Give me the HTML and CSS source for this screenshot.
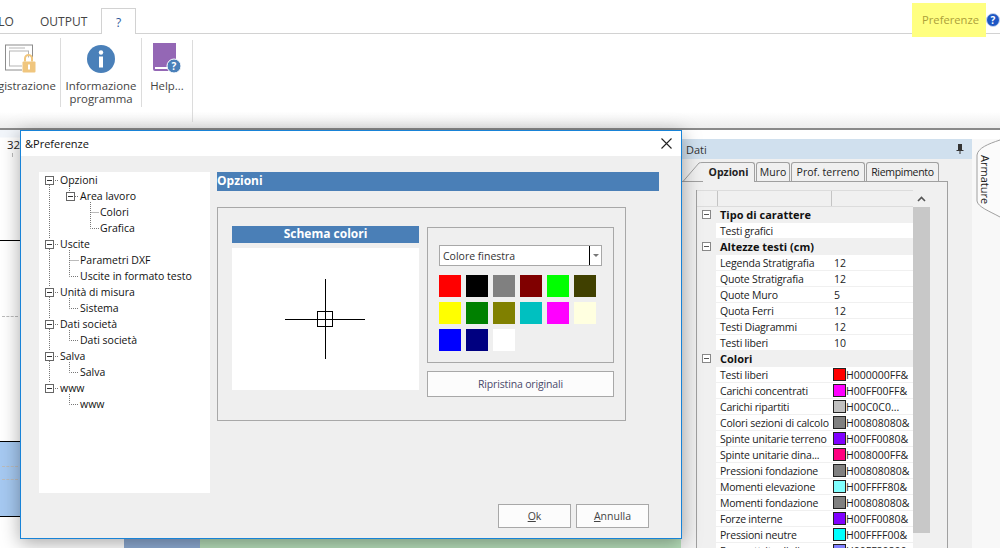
FILE: index.html
```html
<!DOCTYPE html>
<html lang="en">
<head>
  <meta charset="UTF-8">
  <title>Preferenze</title>
  <link rel="stylesheet" href="styles.css">
</head>
<body>

  <!-- Ribbon -->
  <header class="ribbon">
    <div class="tab-row">
      <span class="top-tab cut-tab">CALCOLO</span>
      <span class="top-tab">OUTPUT</span>
      <span class="top-tab active">?</span>
      <span class="pref-mark">Preferenze</span>
      <svg class="help-dot" width="14" height="14" viewBox="0 0 14 14">
        <circle cx="7" cy="7" r="6.5" fill="#1c56c4" stroke="#c9d6ee"/>
        <text x="7" y="11" text-anchor="middle" class="help-dot-text">?</text>
      </svg>
    </div>
    <div class="ribbon-body">
      <div class="rb-group rb-first">
        <svg width="31" height="29" viewBox="0 0 31 29" class="rb-icon">
          <rect x="0.5" y="0.5" width="27" height="25" fill="#fff" stroke="#8c8c8c"/>
          <rect x="4.5" y="6.5" width="19" height="15" fill="#fff" stroke="#b5b5b5"/>
          <path d="M4 3.500h16" stroke="#b5b5b5"/>
          <rect x="17" y="13" width="13" height="15" fill="#fff"/>
          <path d="M20 17v-3a3.500 3.500 0 0 1 7 0v3" fill="none" stroke="#f0c67e" stroke-width="2"/>
          <rect x="17.500" y="17" width="13" height="11" rx="1" fill="#f0c67e"/>
          <rect x="23" y="20" width="2" height="5" fill="#fff"/>
        </svg>
        <span class="rb-label">Registrazione</span>
      </div>
      <div class="rb-group rb-info">
        <svg width="28" height="28" viewBox="0 0 28 28" class="rb-icon">
          <circle cx="14" cy="14" r="14" fill="#4a80b9"/>
          <circle cx="14" cy="7.500" r="2.200" fill="#fff"/>
          <rect x="12" y="11.500" width="4" height="11" fill="#fff"/>
        </svg>
        <span class="rb-label">Informazione<br>programma</span>
      </div>
      <div class="rb-group rb-help">
        <svg width="30" height="30" viewBox="0 0 30 30" class="rb-icon">
          <path d="M1 0h23v24H3v2h16v2H3a2 2 0 0 1-2-2z" fill="#9467b5"/>
          <circle cx="22" cy="23" r="7" fill="#4a80b9" stroke="#fff"/>
          <text x="22" y="27" text-anchor="middle" class="book-mark">?</text>
        </svg>
        <span class="rb-label">Help...</span>
      </div>
    </div>
  </header>

  <main class="workspace">

    <!-- Drawing behind the dialog -->
    <section class="canvas">
      <div class="ruler"><span>32</span></div>
      <div class="plot">
        <div class="plot-blank"><i class="dash dash-a"></i></div>
        <div class="plot-band"><i class="dash dash-b"></i><i class="dash dash-c"></i></div>
        <div class="plot-rest"></div>
      </div>
      <div class="floor">
        <div class="floor-blue"></div>
        <div class="floor-green"></div>
      </div>
    </section>

    <!-- Data panel -->
    <aside class="dati">
      <div class="dati-main">
        <div class="dati-head"><span>Dati</span>
          <svg width="8" height="10" viewBox="0 0 8 10"><path d="M2 0h4v6h1.500v1h-3v3h-1V7h-3V6H2z" fill="#333"/></svg>
        </div>
        <div class="dati-tabs">
          <svg class="tab-slant" width="22" height="20" viewBox="0 0 22 20"><path d="M0 19.500h2L18 1q1-.5 4-.5" fill="none" stroke="#a0a0a0"/></svg>
          <span class="d-tab on">Opzioni</span>
          <span class="d-tab muro">Muro</span>
          <span class="d-tab prof">Prof. terreno</span>
          <span class="d-tab riemp">Riempimento</span>
        </div>
        <div class="dati-body">
          <div class="grid-wrap">
            <div class="grid">
              <div class="row head"><i></i><b></b><em></em></div>
              <div class="row cat"><i><u></u></i><b>Tipo di carattere</b></div>
              <div class="row"><i></i><b>Testi grafici</b><em></em></div>
              <div class="row cat"><i><u></u></i><b>Altezze testi (cm)</b></div>
              <div class="row"><i></i><b>Legenda Stratigrafia</b><em>12</em></div>
              <div class="row"><i></i><b>Quote Stratigrafia</b><em>12</em></div>
              <div class="row"><i></i><b>Quote Muro</b><em>5</em></div>
              <div class="row"><i></i><b>Quota Ferri</b><em>12</em></div>
              <div class="row"><i></i><b>Testi Diagrammi</b><em>12</em></div>
              <div class="row"><i></i><b>Testi liberi</b><em>10</em></div>
              <div class="row cat"><i><u></u></i><b>Colori</b></div>
              <div class="row"><i></i><b>Testi liberi</b><em class="col"><s class="c-red"></s>H000000FF&amp;</em></div>
              <div class="row"><i></i><b>Carichi concentrati</b><em class="col"><s class="c-mag"></s>H00FF00FF&amp;</em></div>
              <div class="row"><i></i><b>Carichi ripartiti</b><em class="col"><s class="c-sil"></s>H00C0C0...</em></div>
              <div class="row"><i></i><b>Colori sezioni di calcolo</b><em class="col"><s class="c-gry"></s>H00808080&amp;</em></div>
              <div class="row"><i></i><b>Spinte unitarie terreno</b><em class="col"><s class="c-vio"></s>H00FF0080&amp;</em></div>
              <div class="row"><i></i><b>Spinte unitarie dina...</b><em class="col"><s class="c-ros"></s>H008000FF&amp;</em></div>
              <div class="row"><i></i><b>Pressioni fondazione</b><em class="col"><s class="c-gry"></s>H00808080&amp;</em></div>
              <div class="row"><i></i><b>Momenti elevazione</b><em class="col"><s class="c-aqu"></s>H00FFFF80&amp;</em></div>
              <div class="row"><i></i><b>Momenti fondazione</b><em class="col"><s class="c-gry"></s>H00808080&amp;</em></div>
              <div class="row"><i></i><b>Forze interne</b><em class="col"><s class="c-vio"></s>H00FF0080&amp;</em></div>
              <div class="row"><i></i><b>Pressioni neutre</b><em class="col"><s class="c-cya"></s>H00FFFF00&amp;</em></div>
              <div class="row"><i></i><b>Forze attrito di di</b><em class="col"><s class="c-per"></s>H00FF8080&amp;</em></div>
            </div>
            <div class="scroll">
              <div class="scroll-up"><svg width="9" height="6" viewBox="0 0 9 6"><path d="M1 5l3.500-3.500L8 5" fill="none" stroke="#555" stroke-width="1.600"/></svg></div>
              <div class="scroll-thumb"></div>
            </div>
          </div>
        </div>
      </div>
      <div class="side-tabs">
        <svg class="arm-shape" width="26" height="80" viewBox="0 0 26 80"><path d="M26 1C14 5 4 9 3 16v46c1 6 12 10 23 16" fill="#fbfbfb" stroke="#a0a0a0"/></svg>
        <span class="arm-label">Armature</span>
      </div>
    </aside>
  </main>

  <!-- Preferences dialog -->
  <div class="dialog">
    <div class="dlg-title">
      <span>&amp;Preferenze</span>
      <svg width="11" height="11" viewBox="0 0 11 11"><path d="M.5.500l10 10M10.500.500l-10 10" stroke="#222" stroke-width="1.100"/></svg>
    </div>
    <div class="dlg-body">
      <div class="dlg-columns">
        <nav class="tree">
          <svg class="tree-lines" width="171" height="321" viewBox="39 172 171 321">
            <path d="M49.500 185V239M49.500 249V287M49.500 297V319M49.500 329V351M49.500 361V383
                     M55 180.500H59M55 244.500H59M55 292.500H59M55 324.500H59M55 356.500H59M55 388.500H59
                     M69.500 186V191M75 196.500H79
                     M90.500 202V228.500H99M90.500 212.500H99
                     M69.500 250V276.500H79M69.500 260.500H79
                     M69.500 298V308.500H79M69.500 330V340.500H79M69.500 362V372.500H79M69.500 394V404.500H79"
                  fill="none" stroke="#777" stroke-dasharray="1 1"/>
          </svg>
          <div class="node lv0"><i class="box"></i><span>Opzioni</span></div>
          <div class="node lv1"><i class="box"></i><span>Area lavoro</span></div>
          <div class="node lv2"><span>Colori</span></div>
          <div class="node lv2"><span>Grafica</span></div>
          <div class="node lv0"><i class="box"></i><span>Uscite</span></div>
          <div class="node lv3"><span>Parametri DXF</span></div>
          <div class="node lv3"><span>Uscite in formato testo</span></div>
          <div class="node lv0"><i class="box"></i><span>Unità di misura</span></div>
          <div class="node lv3"><span>Sistema</span></div>
          <div class="node lv0"><i class="box"></i><span>Dati società</span></div>
          <div class="node lv3"><span>Dati società</span></div>
          <div class="node lv0"><i class="box"></i><span>Salva</span></div>
          <div class="node lv3"><span>Salva</span></div>
          <div class="node lv0"><i class="box"></i><span>www</span></div>
          <div class="node lv3"><span>www</span></div>
        </nav>
        <section class="options">
          <h3 class="opt-head">Opzioni</h3>
          <div class="opt-panel">
            <div class="schema">
              <div class="schema-title">Schema colori</div>
              <div class="schema-view">
                <svg class="cross" width="80" height="80" viewBox="0 0 80 80">
                  <path d="M40.500 0v80M0 40.500h80" stroke="#000"/>
                  <rect x="32.500" y="32.500" width="15" height="15" fill="none" stroke="#000"/>
                </svg>
              </div>
            </div>
            <div class="colors">
              <div class="color-box">
                <div class="combo"><span>Colore finestra</span><i class="combo-arrow"></i></div>
                <div class="swatches">
                  <i class="sw-red"></i><i class="sw-black"></i><i class="sw-gray"></i><i class="sw-maroon"></i><i class="sw-lime"></i><i class="sw-bark"></i>
                  <i class="sw-yellow"></i><i class="sw-green"></i><i class="sw-olive"></i><i class="sw-teal"></i><i class="sw-pink"></i><i class="sw-cream"></i>
                  <i class="sw-blue"></i><i class="sw-navy"></i><i class="sw-white"></i>
                </div>
              </div>
              <button class="btn btn-reset">Ripristina originali</button>
            </div>
          </div>
        </section>
      </div>
      <div class="dlg-buttons">
        <button class="btn btn-dlg"><u>O</u>k</button>
        <button class="btn btn-dlg"><u>A</u>nnulla</button>
      </div>
    </div>
  </div>

</body>
</html>
```
FILE: styles.css
```css
/* General styles */
html, body {
  margin: 0;
  padding: 0;
}

body {
  width: 1000px;
  height: 548px;
  overflow: hidden;
  position: relative;
  background-color: #fff;
  color: #222;
  font-family: "Open Sans", "Noto Sans", sans-serif;
  font-size: 10.5px;
}

/* Ribbon */
.ribbon {
  height: 128px;
  background: linear-gradient(#fff 112px, #eee 127px);
  border-bottom: 2px solid #8a8a8a;
}

.tab-row {
  height: 33px;
  display: flex;
  align-items: flex-end;
  border-bottom: 1px solid #d2d2d2;
}

.top-tab {
  height: 25px;
  line-height: 27px;
  font-size: 12px;
  color: #444;
  margin-left: 29px;
  width: 46px;
  text-align: center;
}

.cut-tab {
  margin-left: -40px;
  width: 51px;
  text-align: right;
}

.top-tab.active {
  margin-left: 15px;
  width: 33px;
  background-color: #fff;
  border: 1px solid #d2d2d2;
  border-bottom: none;
  margin-bottom: -1px;
  height: 25px;
  color: #2b579a;
}

.pref-mark {
  margin-left: 776px;
  margin-bottom: -4px;
  width: 74px;
  height: 34px;
  line-height: 34px;
  text-align: center;
  background-color: #ffff80;
  color: #aca03a;
  font-size: 11.2px;
  padding-left: 3px;
  box-sizing: border-box;
}

.help-dot {
  margin: 0 0 6px 0;
}

.help-dot-text {
  font-size: 10px;
  font-weight: bold;
  fill: #fff;
}

.ribbon-body {
  display: flex;
  height: 94px;
}

.rb-group {
  display: flex;
  flex-direction: column;
  align-items: center;
  height: 69px;
  margin-top: 4px;
  border-right: 1px solid #dcdcdc;
  overflow: hidden;
  line-height: 13px;
  color: #444;
  font-size: 11.4px;
  text-align: center;
}

.rb-icon {
  flex: none;
  margin-top: 6px;
  height: 30px;
}

.rb-label {
  margin-top: 5px;
  white-space: nowrap;
}

.rb-first {
  width: 60px;
  align-items: flex-end;
}

.rb-first .rb-icon {
  margin-right: 24px;
}

.rb-first .rb-label {
  margin-right: 4px;
}

.rb-info {
  width: 80px;
}

.rb-help {
  width: 50px;
  height: 82px;
  margin-top: 6px;
}

.rb-help .rb-icon {
  margin-top: 3px;
}

.rb-help .rb-label {
  margin-top: 6px;
}

.book-mark {
  font-size: 10px;
  font-weight: bold;
  fill: #fff;
}

/* Drawing behind the dialog */
.workspace {
  display: flex;
  height: 418px;
  overflow: hidden;
}

.canvas {
  width: 681px;
  display: flex;
  flex-direction: column;
  background-color: #fff;
}

.ruler {
  height: 27px;
  font-size: 11.5px;
  color: #222;
  padding: 7px 0 0 7px;
  box-sizing: border-box;
  background: linear-gradient(#f2f6fb 7px, #fff 8px);
  position: relative;
}

.ruler::after {
  content: "";
  position: absolute;
  left: 12px;
  bottom: 0;
  height: 4px;
  border-left: 1px solid #bbb;
}

.plot {
  flex: 1;
  display: flex;
  flex-direction: column;
}

.plot-blank {
  height: 202px;
  margin-top: 83px;
  border-top: 1px solid #000;
  border-bottom: 1px solid #000;
  box-sizing: border-box;
  position: relative;
}

.dash {
  position: absolute;
  left: 2px;
  width: 16px;
  border-top: 1px dashed #bbb;
}

.dash-a { top: 75px; }
.dash-b { top: 24px; }
.dash-c { top: 37px; }

.plot-band {
  height: 75px;
  box-sizing: border-box;
  background-color: #a6c9f1;
  border-bottom: 1px solid #000;
  position: relative;
}

.plot-rest {
  flex: 1;
}

.floor {
  height: 9px;
  display: flex;
  padding-left: 124px;
}

.floor-blue {
  width: 76px;
  background-color: #8eabd3;
}

.floor-green {
  flex: 1;
  background-color: #b6deba;
}

/* Data panel */
.dati {
  flex: 1;
  display: flex;
  padding-top: 9px;
  background-color: #fff;
}

.dati-main {
  width: 291px;
  background-color: #f0f0f0;
}

.dati-head {
  height: 20px;
  padding: 0 8px 0 5px;
  display: flex;
  align-items: center;
  justify-content: space-between;
  background-color: #d0e0ee;
  font-size: 11px;
  color: #333;
}

.dati-tabs {
  display: flex;
  align-items: flex-end;
  height: 23px;
  width: 267px;
  box-sizing: border-box;
  border-bottom: 1px solid #a0a0a0;
  font-size: 10.5px;
}

.tab-slant {
  flex: none;
  margin-bottom: -1px;
}

.d-tab {
  height: 19px;
  line-height: 18px;
  text-align: center;
  box-sizing: border-box;
  border: 1px solid #a0a0a0;
  border-bottom: none;
  border-radius: 3px 3px 0 0;
  margin-left: 1px;
}

.d-tab.on {
  font-weight: bold;
  width: 52px;
  margin-left: 0;
  border-left: none;
  border-radius: 0 3px 0 0;
  height: 20px;
  margin-bottom: -1px;
  background-color: #f0f0f0;
}

.d-tab.muro {
  width: 34px;
}

.d-tab.prof {
  width: 74px;
}

.d-tab.riemp {
  width: 73px;
  letter-spacing: -0.3px;
}

.dati-body {
  width: 267px;
  height: 366px;
  overflow: hidden;
  box-sizing: border-box;
  border-right: 1px solid #a0a0a0;
  padding: 8px 0 0 15px;
}

.grid-wrap {
  display: flex;
  width: 234px;
}

.grid {
  width: 217px;
  background-color: #f0f0f0;
  border-left: 1px solid #a0a0a0;
  box-sizing: border-box;
}

.row {
  display: flex;
  height: 16px;
  box-sizing: border-box;
  border-bottom: 1px solid #f0f0f0;
  background-color: #fff;
  line-height: 16px;
  white-space: nowrap;
}

.row.head {
  height: 17px;
  background-color: #f0f0f0;
  border-top: 1px solid #dcdcdc;
  border-bottom: 1px solid #dcdcdc;
}

.row.head b, .row.head em {
  background-color: #f0f0f0;
  border-left: 1px solid #c4c4c4;
}

.row i {
  width: 19px;
  flex: none;
  background-color: #f0f0f0;
  display: flex;
  align-items: center;
  justify-content: center;
}

.row i u {
  width: 7px;
  height: 7px;
  border: 1px solid #888;
  background: linear-gradient(#555, #555) center / 5px 1px no-repeat #fff;
}

.row b {
  width: 113px;
  flex: none;
  margin-left: 1px;
  padding-left: 3px;
  box-sizing: border-box;
  font-weight: normal;
  overflow: hidden;
  letter-spacing: -0.2px;
}

.row em {
  flex: 1;
  margin-left: 1px;
  padding-left: 3px;
  font-style: normal;
  overflow: hidden;
}

.row em.col {
  display: flex;
  align-items: center;
  padding-left: 2px;
}

.row.cat {
  background-color: #f0f0f0;
  line-height: 15px;
}

.row.cat b {
  font-weight: bold;
  width: 190px;
  font-size: 11px;
  color: #111;
  letter-spacing: 0;
}

.row em s {
  flex: none;
  width: 11px;
  height: 11px;
  border: 1px solid #222;
}

.c-red { background-color: #ff0000; }
.c-mag { background-color: #ff00ff; }
.c-sil { background-color: #c0c0c0; }
.c-gry { background-color: #808080; }
.c-vio { background-color: #8000ff; }
.c-ros { background-color: #ff0080; }
.c-aqu { background-color: #80ffff; }
.c-cya { background-color: #00ffff; }
.c-per { background-color: #8080ff; }

.scroll {
  width: 17px;
  background-color: #f0f0f0;
}

.scroll-up {
  height: 17px;
  display: flex;
  align-items: center;
  justify-content: center;
}

.scroll-thumb {
  height: 326px;
  background-color: #c8c8c8;
}

.side-tabs {
  flex: 1;
  position: relative;
  background-color: #f8f8f8;
}

.arm-shape {
  position: absolute;
  left: 2px;
  top: 0;
}

.arm-label {
  position: absolute;
  left: 6px;
  top: 16px;
  writing-mode: vertical-rl;
  font-size: 11px;
  color: #222;
}

/* Preferences dialog */
.dialog {
  position: absolute;
  left: 20px;
  top: 130px;
  width: 662px;
  height: 409px;
  box-sizing: border-box;
  border: 1px solid #1883d7;
  background-color: #efefef;
  box-shadow: 0 4px 18px rgba(0, 0, 0, 0.35);
  display: flex;
  flex-direction: column;
}

.dlg-title {
  flex: none;
  height: 25px;
  line-height: 24px;
  background-color: #fff;
  display: flex;
  align-items: center;
  justify-content: space-between;
  padding: 0 9px 0 4px;
  font-size: 11px;
  color: #111;
}

.dlg-body {
  flex: 1;
  padding: 16px 0 0 18px;
}

.dlg-columns {
  display: flex;
  gap: 7px;
}

/* Tree */
.tree {
  position: relative;
  width: 171px;
  height: 321px;
  background-color: #fff;
}

.tree-lines {
  position: absolute;
  left: 0;
  top: 0;
}

.node {
  height: 16px;
  display: flex;
  align-items: center;
  white-space: nowrap;
  position: relative;
  color: #111;
}

.box {
  width: 7px;
  height: 7px;
  margin-right: 6px;
  border: 1px solid #666;
  background: linear-gradient(#333, #333) center / 5px 1px no-repeat #fff;
}

.lv0 { padding-left: 6px; }
.lv1 { padding-left: 27px; }
.lv1 .box { margin-right: 5px; }
.lv2 { padding-left: 61px; }
.lv3 { padding-left: 41px; }

/* Options */
.options {
  width: 442px;
}

.opt-head {
  margin: 0;
  height: 19px;
  line-height: 17px;
  background-color: #4a7fb7;
  color: #fff;
  font-size: 12px;
  font-weight: bold;
}

.opt-panel {
  width: 409px;
  height: 214px;
  box-sizing: border-box;
  margin-top: 16px;
  padding: 18px 0 0 14px;
  border: 1px solid #a8a8a8;
  display: flex;
  gap: 8px;
}

.schema {
  width: 187px;
}

.schema-title {
  height: 17px;
  line-height: 16px;
  background-color: #4a7fb7;
  color: #fff;
  font-size: 12px;
  font-weight: bold;
  text-align: center;
}

.schema-view {
  margin-top: 5px;
  height: 142px;
  background-color: #fff;
  display: flex;
  align-items: center;
  justify-content: center;
}

.cross {
  margin-right: 2px;
}

.colors {
  width: 187px;
  margin-top: 1px;
  display: flex;
  flex-direction: column;
  gap: 8px;
}

.color-box {
  height: 136px;
  box-sizing: border-box;
  border: 1px solid #a8a8a8;
  padding: 17px 0 0 11px;
}

.combo {
  width: 163px;
  height: 21px;
  box-sizing: border-box;
  border: 1px solid #a8a8a8;
  background-color: #fff;
  display: flex;
  align-items: center;
  justify-content: space-between;
  padding-left: 3px;
  font-size: 10.5px;
  color: #333;
}

.combo-arrow {
  width: 12px;
  height: 19px;
  box-sizing: border-box;
  border-left: 1px solid #000;
  position: relative;
}

.combo-arrow::after {
  content: "";
  position: absolute;
  left: 3px;
  top: 8px;
  border: 3px solid transparent;
  border-top: 3px solid #777;
}

.swatches {
  margin-top: 9px;
  display: grid;
  grid-template-columns: repeat(6, 22px);
  grid-auto-rows: 22px;
  gap: 5px;
}

.sw-red { background-color: #ff0000; }
.sw-black { background-color: #000; }
.sw-gray { background-color: #808080; }
.sw-maroon { background-color: #800000; }
.sw-lime { background-color: #00ff00; }
.sw-bark { background-color: #404000; }
.sw-yellow { background-color: #ffff00; }
.sw-green { background-color: #008000; }
.sw-olive { background-color: #808000; }
.sw-teal { background-color: #00c0c0; }
.sw-pink { background-color: #ff00ff; }
.sw-cream { background-color: #ffffe0; }
.sw-blue { background-color: #0000ff; }
.sw-navy { background-color: #000080; }
.sw-white { background-color: #fff; }

.btn {
  font-family: inherit;
  font-size: 10.5px;
  color: #444;
  background-color: #fcfcfc;
  border: 1px solid #a8a8a8;
  padding: 0;
}

.btn-reset {
  height: 26px;
  color: #4a4a6a;
  letter-spacing: -0.15px;
}

.dlg-buttons {
  display: flex;
  justify-content: flex-end;
  gap: 5px;
  margin-top: 11px;
  padding-right: 32px;
}

.btn-dlg {
  width: 73px;
  height: 24px;
}
```
